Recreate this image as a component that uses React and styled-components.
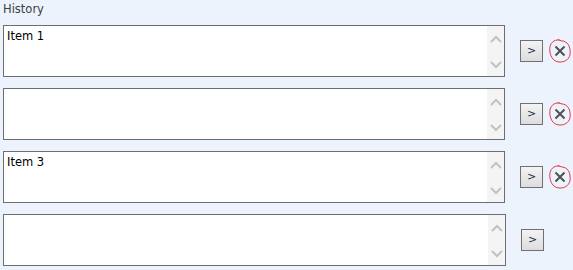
import React from 'react';
import styled, { createGlobalStyle } from 'styled-components';

const GlobalStyle = createGlobalStyle`
  * {
    margin: 0;
    padding: 0;
    box-sizing: border-box;
  }

  body {
    font-family: Tahoma, 'DejaVu Sans', 'Liberation Sans', sans-serif;
    background: #ecf3fd;
    color: #000000;
  }
`;

const Panel = styled.div`
  width: 573px;
  height: 270px;
  padding: 3px 0 0 3px;
  display: flex;
  flex-direction: column;
`;

const Label = styled.div`
  font-size: 11.5px;
  color: #404040;
  height: 22px;
  line-height: 13px;
`;

const List = styled.div`
  display: flex;
  flex-direction: column;
  gap: 11px;
`;

const Row = styled.div`
  display: flex;
  align-items: center;
  height: 52px;
`;

const Box = styled.div`
  width: 503px;
  height: 52px;
  border: 1px solid #6e6e6e;
  background: #ffffff;
  display: flex;
`;

const Text = styled.div`
  flex: 1;
  padding: 3px 0 0 3px;
  font-size: 11.5px;
  line-height: 14px;
`;

const Scroll = styled.div`
  width: 17px;
  background: #f4f4f4;
  display: flex;
  flex-direction: column;
  justify-content: space-between;
  align-items: center;
  padding: 9px 0 7px;
`;

const Go = styled.button`
  margin-left: 15px;
  width: 23px;
  height: 22px;
  border: 1px solid #707070;
  background: linear-gradient(#f3f3f3, #dddddd);
  font-family: Tahoma, 'DejaVu Sans', sans-serif;
  font-size: 11px;
  color: #1c2a55;
  display: flex;
  align-items: center;
  justify-content: center;
  padding-bottom: 1px;
`;

const Remove = styled.div`
  margin-left: 4px;
  width: 26px;
  height: 28px;
  display: flex;
  align-items: center;
  justify-content: center;
`;

const Chevron = ({ up }) => (
  <svg width="12" height="8" viewBox="0 0 12 8">
    <path
      d={up ? 'M1 7 L6 2 L11 7' : 'M1 1 L6 6 L11 1'}
      fill="none"
      stroke="#c2c2c2"
      strokeWidth="2"
    />
  </svg>
);

const Cross = () => (
  <svg width="26" height="28" viewBox="0 0 26 28">
    <path
      d="M12.5 3 C6.5 2.4 3 6.5 2.8 11.5 C2.5 18 5.5 24.5 12 25 C18.5 25.5 23.2 21.5 23.2 15.5 C23.2 9.5 21 4.2 14.2 3.8 L10.8 2.5"
      fill="none"
      stroke="#e2343f"
      strokeWidth="1"
    />
    <path
      d="M8.5 9.5 L17.5 18.5 M17.5 9.5 L8.5 18.5"
      stroke="#505050"
      strokeWidth="2"
      strokeLinecap="butt"
    />
  </svg>
);

const items = [
  { text: 'Item 1', removable: true },
  { text: '', removable: true },
  { text: 'Item 3', removable: true },
  { text: '', removable: false },
];

export default function App() {
  return (
    <>
      <GlobalStyle />
      <Panel>
        <Label>History</Label>
        <List>
          {items.map((item, i) => (
            <Row key={i}>
              <Box>
                <Text>{item.text}</Text>
                <Scroll>
                  <Chevron up />
                  <Chevron />
                </Scroll>
              </Box>
              <Go>&gt;</Go>
              {item.removable && (
                <Remove>
                  <Cross />
                </Remove>
              )}
            </Row>
          ))}
        </List>
      </Panel>
    </>
  );
}
